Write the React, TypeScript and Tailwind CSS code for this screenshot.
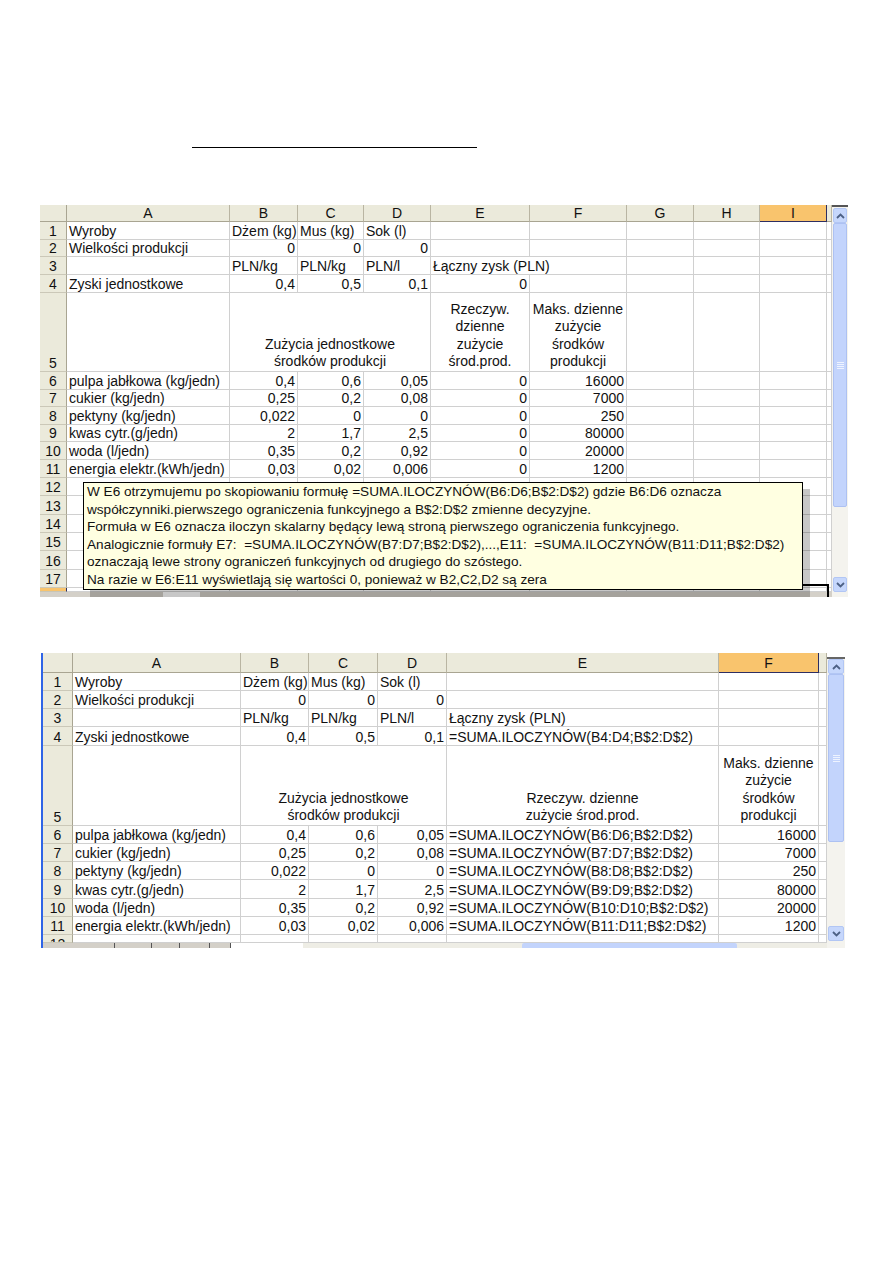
import React from "react";

type Cell = { t?: string; a?: "l" | "r" | "c"; span?: 1 | 2 | 3 };
type Row = { n: string; cells: Cell[]; sel?: boolean; part?: boolean };

const spanCls: Record<number, string> = { 1: "", 2: "col-span-2", 3: "col-span-3" };
const alignCls = {
  l: "justify-start text-left",
  r: "justify-end text-right",
  c: "justify-center text-center",
};

function fill(cells: Cell[], total: number): Cell[] {
  const used = cells.reduce((s, c) => s + (c.span ?? 1), 0);
  return [...cells, ...Array.from({ length: Math.max(0, total - used) }, () => ({}))];
}

const r = (t: string): Cell => ({ t, a: "r" });
const l = (t: string): Cell => ({ t, a: "l" });

// first sheet: values
const rows1: Row[] = [
  { n: "1", cells: [l("Wyroby"), l("Dżem (kg)"), l("Mus (kg)"), l("Sok (l)")] },
  { n: "2", cells: [l("Wielkości produkcji"), r("0"), r("0"), r("0")] },
  { n: "3", cells: [{}, l("PLN/kg"), l("PLN/kg"), l("PLN/l"), { t: "Łączny zysk (PLN)", span: 2 }] },
  { n: "4", cells: [l("Zyski jednostkowe"), r("0,4"), r("0,5"), r("0,1"), r("0")] },
  {
    n: "5",
    cells: [
      {},
      { t: "Zużycia jednostkowe\nśrodków produkcji", a: "c", span: 3 },
      { t: "Rzeczyw.\ndzienne\nzużycie\nśrod.prod.", a: "c" },
      { t: "Maks. dzienne\nzużycie\nśrodków\nprodukcji", a: "c" },
    ],
  },
  { n: "6", cells: [l("pulpa jabłkowa (kg/jedn)"), r("0,4"), r("0,6"), r("0,05"), r("0"), r("16000")] },
  { n: "7", cells: [l("cukier (kg/jedn)"), r("0,25"), r("0,2"), r("0,08"), r("0"), r("7000")] },
  { n: "8", cells: [l("pektyny (kg/jedn)"), r("0,022"), r("0"), r("0"), r("0"), r("250")] },
  { n: "9", cells: [l("kwas cytr.(g/jedn)"), r("2"), r("1,7"), r("2,5"), r("0"), r("80000")] },
  { n: "10", cells: [l("woda (l/jedn)"), r("0,35"), r("0,2"), r("0,92"), r("0"), r("20000")] },
  { n: "11", cells: [l("energia elektr.(kWh/jedn)"), r("0,03"), r("0,02"), r("0,006"), r("0"), r("1200")] },
  { n: "12", cells: [] },
  { n: "13", cells: [] },
  { n: "14", cells: [] },
  { n: "15", cells: [] },
  { n: "16", cells: [] },
  { n: "17", cells: [] },
  { n: "18", cells: [], sel: true, part: true },
];

// second sheet: formulas shown
const f = (a: string, b: string) => l(`=SUMA.ILOCZYNÓW(${a}:${b};B$2:D$2)`);
const rows2: Row[] = [
  { n: "1", cells: [l("Wyroby"), l("Dżem (kg)"), l("Mus (kg)"), l("Sok (l)")] },
  { n: "2", cells: [l("Wielkości produkcji"), r("0"), r("0"), r("0")] },
  { n: "3", cells: [{}, l("PLN/kg"), l("PLN/kg"), l("PLN/l"), l("Łączny zysk (PLN)")] },
  { n: "4", cells: [l("Zyski jednostkowe"), r("0,4"), r("0,5"), r("0,1"), f("B4", "D4")] },
  {
    n: "5",
    cells: [
      {},
      { t: "Zużycia jednostkowe\nśrodków produkcji", a: "c", span: 3 },
      { t: "Rzeczyw. dzienne\nzużycie środ.prod.", a: "c" },
      { t: "Maks. dzienne\nzużycie\nśrodków\nprodukcji", a: "c" },
    ],
  },
  { n: "6", cells: [l("pulpa jabłkowa (kg/jedn)"), r("0,4"), r("0,6"), r("0,05"), f("B6", "D6"), r("16000")] },
  { n: "7", cells: [l("cukier (kg/jedn)"), r("0,25"), r("0,2"), r("0,08"), f("B7", "D7"), r("7000")] },
  { n: "8", cells: [l("pektyny (kg/jedn)"), r("0,022"), r("0"), r("0"), f("B8", "D8"), r("250")] },
  { n: "9", cells: [l("kwas cytr.(g/jedn)"), r("2"), r("1,7"), r("2,5"), f("B9", "D9"), r("80000")] },
  { n: "10", cells: [l("woda (l/jedn)"), r("0,35"), r("0,2"), r("0,92"), f("B10", "D10"), r("20000")] },
  { n: "11", cells: [l("energia elektr.(kWh/jedn)"), r("0,03"), r("0,02"), r("0,006"), f("B11", "D11"), r("1200")] },
  { n: "12", cells: [], part: true },
];

function SheetGrid({
  gridCls,
  letters,
  sel,
  rows,
}: {
  gridCls: string;
  letters: string[];
  sel: number;
  rows: Row[];
}) {
  return (
    <div className={`grid ${gridCls}`}>
      <div className="bg-[#ebeadb] border-r border-b border-r-[#a9a592] border-b-[#a9a592]" />
      {letters.map((c, i) => (
        <div
          key={i}
          className={`flex items-center justify-center overflow-hidden border-r border-b leading-[16px] ${
            i === sel
              ? "bg-[#f9c46d] border-r-[#2d2e62] border-b-[#2d2e62]"
              : "bg-[#ebeadb] border-r-[#b9b5a2] border-b-[#a9a592]"
          }`}
        >
          {c}
        </div>
      ))}
      {rows.map((row, ri) => (
        <React.Fragment key={ri}>
          <div
            className={`flex justify-center overflow-hidden border-r border-b leading-[16px] ${
              row.part ? "items-start pt-px" : "items-end"
            } ${
              row.sel
                ? "bg-[#f9c46d] border-r-[#2d2e62] border-b-[#c8c5b5]"
                : "bg-[#ebeadb] border-r-[#a9a592] border-b-[#cbc8b8]"
            }`}
          >
            {row.n}
          </div>
          {fill(row.cells, letters.length).map((c, ci) => (
            <div
              key={ci}
              className={`flex items-end overflow-hidden whitespace-pre px-[2px] border-r border-b border-[#d0d0d0] ${
                c.t?.includes("\n") ? "leading-[17.6px]" : "leading-[16px]"
              } ${spanCls[c.span ?? 1]} ${alignCls[c.a ?? "l"]}`}
            >
              {c.t}
            </div>
          ))}
        </React.Fragment>
      ))}
    </div>
  );
}

function ArrowBtn({ up }: { up?: boolean }) {
  return (
    <div className="mx-px flex h-[15px] items-center justify-center rounded-[2px] border border-[#b2c6f4] bg-[#c6d7fc]">
      <svg width="9" height="6" viewBox="0 0 9 6">
        <polyline
          points={up ? "1,5 4.5,1.5 8,5" : "1,1 4.5,4.5 8,1"}
          fill="none"
          stroke="#4d6185"
          strokeWidth="1.8"
        />
      </svg>
    </div>
  );
}

function Thumb({ h }: { h: string }) {
  return (
    <div
      className={`mx-px ${h} flex flex-col items-center justify-center gap-px rounded-[2px] border border-[#adc1f2] bg-[#c3d4fc]`}
    >
      <div className="h-px w-[7px] bg-[#eef3ff]" />
      <div className="h-px w-[7px] bg-[#eef3ff]" />
      <div className="h-px w-[7px] bg-[#eef3ff]" />
      <div className="h-px w-[7px] bg-[#eef3ff]" />
    </div>
  );
}

const comment = [
  "W E6 otrzymujemu po skopiowaniu formułę =SUMA.ILOCZYNÓW(B6:D6;B$2:D$2) gdzie B6:D6 oznacza",
  "współczynniki.pierwszego ograniczenia funkcyjnego a B$2:D$2 zmienne decyzyjne.",
  "Formuła w E6 oznacza iloczyn skalarny będący lewą stroną pierwszego ograniczenia funkcyjnego.",
  "Analogicznie formuły E7:  =SUMA.ILOCZYNÓW(B7:D7;B$2:D$2),...,E11:  =SUMA.ILOCZYNÓW(B11:D11;B$2:D$2)",
  "oznaczają lewe strony ograniczeń funkcyjnych od drugiego do szóstego.",
  "Na razie w E6:E11 wyświetlają się wartości 0, ponieważ w B2,C2,D2 są zera",
];

export default function App() {
  return (
    <div className="min-h-[1263px] w-[893px] bg-white pt-[147px] font-['Liberation_Sans',Arial,sans-serif] text-[14px] text-[#111]">
      <div className="ml-[192px] h-px w-[285px] bg-black" />

      {/* sheet with values and comment */}
      <div className="relative ml-[40px] mt-[57px] flex w-[808px]">
        <div className="flex w-[792px] flex-col">
          <SheetGrid
            gridCls="grid-cols-[27px_163px_68px_66px_67px_99px_97px_67px_66px_67px_5px] grid-rows-[17px_18px_17px_18px_18px_79px_18px_17px_18px_17px_18px_18px_18px_19px_18px_18px_19px_18px_4px]"
            letters={["A", "B", "C", "D", "E", "F", "G", "H", "I", ""]}
            sel={8}
            rows={rows1}
          />
          <div className="flex h-[5px] bg-[#d4d0c8]">
            <div className="w-[123px]" />
            <div className="w-[37px] bg-white" />
          </div>
        </div>
        <div className="flex w-[16px] flex-col bg-[#f4f3ee]">
          <div className="h-[2px] bg-[#555]" />
          <div className="h-px" />
          <ArrowBtn up />
          <Thumb h="h-[284px]" />
          <div className="h-[70px]" />
          <ArrowBtn />
          <div className="h-[5px]" />
        </div>

        <div className="absolute left-[391px] top-[379px] h-[2px] w-[398px] bg-black" />
        <div className="absolute left-[787px] top-[379px] h-[13px] w-[2px] bg-black" />

        <div className="absolute left-[43px] top-[277px] h-[108px] w-[720px] whitespace-pre border border-black bg-[#ffffe1] px-[3px] text-[13.6px] leading-[17.6px] shadow-[7px_7px_0_rgba(0,0,0,0.22)]">
          {comment.map((c, i) => (
            <div key={i}>{c}</div>
          ))}
        </div>
      </div>

      {/* sheet with formulas */}
      <div className="ml-[41px] mt-[56px] flex w-[804px] border-l-2 border-[#2f64e6]">
        <div className="flex w-[784px] flex-col">
          <SheetGrid
            gridCls="grid-cols-[30px_168px_68px_69px_69px_272px_100px_8px] grid-rows-[20px_18px_18px_18px_19px_80px_18px_18px_18px_19px_18px_18px_8px]"
            letters={["A", "B", "C", "D", "E", "F", ""]}
            sel={5}
            rows={rows2}
          />
          <div className="flex h-[5px]">
            <div className="flex w-[188px] bg-[#d4d0c8]">
              <div className="w-[72px] border-r border-[#555]" />
              <div className="w-[37px] border-r border-[#555]" />
              <div className="w-[28px] border-r border-[#555]" />
              <div className="w-[30px] border-r border-[#555]" />
              <div className="w-[21px] border-r border-[#555]" />
            </div>
            <div className="w-[72px] bg-white" />
            <div className="flex flex-1 bg-[#eeede5]">
              <div className="w-[219px]" />
              <div className="w-[215px] rounded-t-[2px] bg-[#c3d4fc]" />
            </div>
          </div>
        </div>
        <div className="flex w-[18px] flex-col bg-[#f4f3ee]">
          <div className="h-[4px] bg-white" />
          <div className="h-[2px] bg-[#666]" />
          <ArrowBtn up />
          <Thumb h="h-[168px]" />
          <div className="h-[84px]" />
          <ArrowBtn />
          <div className="h-[6px]" />
        </div>
      </div>
    </div>
  );
}
